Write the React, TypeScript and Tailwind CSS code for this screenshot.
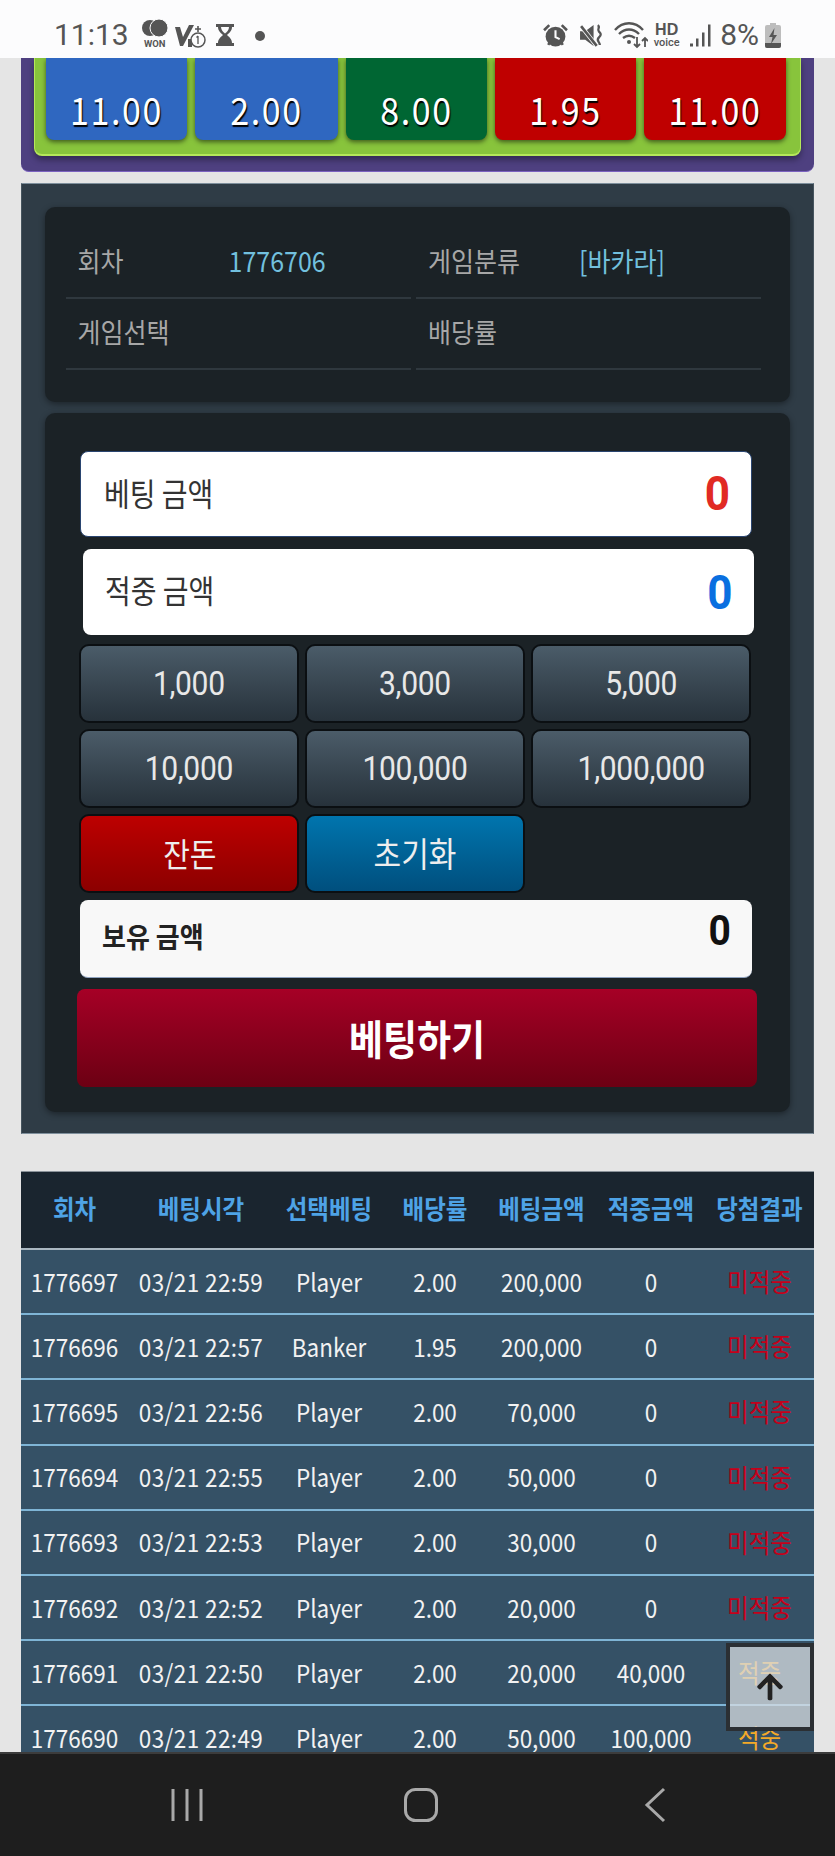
import { FaArrowUp } from 'react-icons/fa';

const odds = [
    { value: '11.00', color: 'bg-[#2f67c0]', width: 'w-[141px]' },
    { value: '2.00', color: 'bg-[#2f67c0]', width: 'w-[143px]' },
    { value: '8.00', color: 'bg-[#006633]', width: 'w-[141px]' },
    { value: '1.95', color: 'bg-[#bf0000]', width: 'w-[141px]' },
    { value: '11.00', color: 'bg-[#bf0000]', width: 'w-[142px]' },
];

const amounts = ['1,000', '3,000', '5,000', '10,000', '100,000', '1,000,000'];

const rows = [
    ['1776697', '03/21 22:59', 'Player', '2.00', '200,000', '0', '미적중'],
    ['1776696', '03/21 22:57', 'Banker', '1.95', '200,000', '0', '미적중'],
    ['1776695', '03/21 22:56', 'Player', '2.00', '70,000', '0', '미적중'],
    ['1776694', '03/21 22:55', 'Player', '2.00', '50,000', '0', '미적중'],
    ['1776693', '03/21 22:53', 'Player', '2.00', '30,000', '0', '미적중'],
    ['1776692', '03/21 22:52', 'Player', '2.00', '20,000', '0', '미적중'],
    ['1776691', '03/21 22:50', 'Player', '2.00', '20,000', '40,000', '적중'],
    ['1776690', '03/21 22:49', 'Player', '2.00', '50,000', '100,000', '적중'],
];

const headers = ['회차', '베팅시각', '선택베팅', '배당률', '베팅금액', '적중금액', '당첨결과'];
const tableCols = 'grid grid-cols-[107px_146px_110px_102px_111px_108px_109px] items-center text-center';

const cellClass = (i: number, cell: string) => {
    if (i === 6) return cell === '적중' ? 'text-[23.500px] text-[#f4a928]' : 'text-[23.500px] text-[#c4001a]';
    if (i === 1) return 'tracking-[0.4px]';
    return '';
};

const StatusBar = () => (
    <div className="relative z-10 h-[58px] shrink-0 bg-[#fcfcfd] flex items-center justify-between pl-[54px] pr-[54px] text-[#555] font-['Roboto',sans-serif]">
        {/* Left: clock and notifications */}
        <div className="flex items-center">
            <span className="text-[30px] leading-none mt-[12px]">11:13</span>
            <div className="relative w-[28px] h-[30px] ml-[12px] mt-[12px]">
                <svg width="28" height="18" viewBox="0 0 28 18" className="absolute -top-[1px] left-0 fill-[#555]">
                    <circle cx="9" cy="9" r="8" />
                    <circle cx="18" cy="9" r="9" stroke="#fcfcfd" strokeWidth="1" />
                </svg>
                <span className="absolute top-[19px] left-0 w-full text-center text-[9.500px] leading-[10px] font-bold">WON</span>
            </div>
            <svg width="32" height="26" viewBox="0 0 32 26" className="ml-[5px] mt-[14px]">
                <path d="M1 4h5l3 10L15 2h5L9 23H6z" fill="#555" />
                <path d="M14 16h4v8h-4z" fill="#555" />
                <circle cx="24" cy="17" r="7" fill="#fcfcfd" stroke="#555" strokeWidth="1.5" />
                <path d="M24 13v8M22.5 14.5L24 13" stroke="#555" strokeWidth="1.3" fill="none" />
                <path d="M24 3v6M21 6h6" stroke="#555" strokeWidth="1.6" />
            </svg>
            <svg width="20" height="24" viewBox="0 0 20 24" className="ml-[9px] mt-[12px]">
                <path d="M1 1h18v3h-2c0 4-3 6-5 8 2 2 5 4 5 8h2v3H1v-3h2c0-4 3-6 5-8-2-2-5-4-5-8H1z" fill="#555" />
                <path d="M6 4h8c0 3-2 5-4 6.500C8 9 6 7 6 4z" fill="#fcfcfd" />
            </svg>
            <span className="w-[10px] h-[10px] rounded-full bg-[#555] ml-[20px] mt-[13px]" />
        </div>

        {/* Right: system icons */}
        <div className="flex items-center mt-[12px]">
            <svg width="25" height="25" viewBox="0 0 24 24">
                <circle cx="12" cy="13" r="9.500" fill="#555" />
                <path d="M12 7v6.500l4 2" stroke="#fcfcfd" strokeWidth="2" fill="none" />
                <path d="M1 7l5-5M23 7l-5-5M5 21l2-3M19 21l-2-3" stroke="#555" strokeWidth="2.500" />
            </svg>
            <svg width="25" height="25" viewBox="0 0 24 24" className="ml-[11px]">
                <path d="M1 8h5l8-6v20l-8-6H1z" fill="#555" />
                <path d="M2 3l15 19" stroke="#fcfcfd" strokeWidth="4" />
                <path d="M2 3l15 19" stroke="#555" strokeWidth="2.500" />
                <path d="M18 2c3 2-1 4 1 6s3 3 0 6 1 4 1 7" stroke="#555" strokeWidth="2.200" fill="none" />
            </svg>
            <svg width="35" height="28" viewBox="0 0 35 28" className="ml-[9px]">
                <path d="M2 9c8-9 20-9 28 0M6 13c6-6 14-6 20 0M10 17c4-3 8-3 12 0" stroke="#555" strokeWidth="2.400" fill="none" />
                <circle cx="16" cy="21" r="2" fill="#555" />
                <path d="M24 16v10M21 23l3 3 3-3M32 26V17M29 20l3-3 3 3" stroke="#555" strokeWidth="1.800" fill="none" />
            </svg>
            <div className="w-[27px] ml-[5px] text-center">
                <div className="text-[16px] leading-[14px] font-bold font-['Liberation_Sans',sans-serif]">HD</div>
                <div className="text-[11px] leading-[11px] font-medium">voice</div>
            </div>
            <svg width="22" height="25" viewBox="0 0 22 24" className="ml-[9px]">
                <path d="M1 20h3v3H1zM7 15h2.500v8H7zM13 9h2.500v14H13zM19 1h2.500v22H19z" fill="#555" />
            </svg>
            <span className="text-[30px] leading-none ml-[9px]">8%</span>
            <svg width="16" height="25" viewBox="0 0 16 25" className="ml-[6px]">
                <path d="M5 0h6v2h3a2 2 0 0 1 2 2v19a2 2 0 0 1-2 2H2a2 2 0 0 1-2-2V4a2 2 0 0 1 2-2h3z" fill="#bdbdbd" />
                <path d="M0 20h16v3a2 2 0 0 1-2 2H2a2 2 0 0 1-2-2z" fill="#555" />
                <path d="M9.500 5L4 14h3.500L6 21l6-9H8.500z" fill="#555" />
            </svg>
        </div>
    </div>
);

const OddsPanel = () => (
    <div className="mx-[21px] h-[113.500px] bg-[#4e4080] border-b border-[#7b62c0] rounded-b-[8px] px-[13px]">
        <div className="h-[98px] bg-[#88c43c] border-x border-b-2 border-[#b5e85a] rounded-b-[8px] pl-[11px] flex gap-[8px] shadow-[0_4px_6px_rgba(0,0,0,0.35)]">
            {odds.map((item, i) => (
                <div key={i} className={`${item.width} ${item.color} h-[82px] rounded-b-[8px] shadow-[0_2px_5px_rgba(0,0,0,0.55)] flex items-end justify-center`}>
                    <span className="text-[34px] leading-[48px] text-white mb-[7px] tracking-[1.600px] scale-y-[1.12] [text-shadow:1px_2px_1px_#000]">{item.value}</span>
                </div>
            ))}
        </div>
    </div>
);

const InfoCell = ({ label, value }: { label: string; value?: string }) => (
    <div className="h-[71px] border-b-2 border-[#2f383e] flex items-center pl-[12px] text-[25px]">
        <span className="w-[151px] text-[#a7a7a7] scale-y-[1.1] -mt-[4px]">{label}</span>
        <span className="text-[#72c0de] scale-y-[1.1] -mt-[4px]">{value}</span>
    </div>
);

const BetPanel = () => (
    <div className="mx-[21px] mt-[11.500px] bg-[#2f3c46] border-y border-[#7e8f9c] border-x border-x-[#46545e] px-[23px] pt-[23px] pb-[21px]">
        {/* Round info */}
        <div className="h-[195px] bg-[#1b2226] rounded-[10px] shadow-[0_2px_6px_rgba(0,0,0,0.4)] pl-[20.500px] pr-[29px] pt-[21px] grid grid-cols-2 gap-x-[5.500px] content-start">
            <InfoCell label="회차" value="1776706" />
            <InfoCell label="게임분류" value="[바카라]" />
            <InfoCell label="게임선택" />
            <InfoCell label="배당률" />
        </div>

        {/* Bet form */}
        <div className="h-[699px] mt-[11px] bg-[#1b2226] rounded-[10px] shadow-[0_2px_6px_rgba(0,0,0,0.4)] pl-[35px] pr-[38px] pt-[38px]">
            <div className="h-[86px] bg-white border border-[#2a4570] rounded-[8px] flex items-center justify-between pl-[23px] pr-[21px]">
                <span className="text-[28px] text-[#333] scale-y-[1.15] -mt-[5px]">베팅 금액</span>
                <span className="text-[44px] font-bold text-[#e12a24] font-['Roboto',sans-serif] scale-y-[1.08]">0</span>
            </div>
            <div className="h-[86px] mt-[12px] ml-[3px] -mr-[1.500px] bg-white rounded-[8px] flex items-center justify-between pl-[22px] pr-[21px]">
                <span className="text-[28px] text-[#333] scale-y-[1.15] -mt-[6px]">적중 금액</span>
                <span className="text-[44px] font-bold text-[#0a6fe0] font-['Roboto',sans-serif] scale-y-[1.08] mt-[1px]">0</span>
            </div>

            <div className="mt-[9px] mr-[1px] grid grid-cols-3 gap-x-[6.500px] gap-y-[6px] auto-rows-[79px] -mx-[1px]">
                {amounts.map((a) => (
                    <button key={a} className="rounded-[10px] border-2 border-[#0b0f12] bg-gradient-to-b from-[#4b5c69] to-[#27323b] text-[30px] text-[#e8e8e8] font-['Roboto',sans-serif] tracking-[-0.3px]">
                        <span className="inline-block scale-y-[1.08] -mt-[2px]">{a}</span>
                    </button>
                ))}
                <button className="rounded-[10px] border-2 border-[#0b0f12] bg-gradient-to-b from-[#bd0000] to-[#8c0000] text-[29px] text-[#eeeeee]">
                    <span className="inline-block scale-y-[1.12] -mt-[6px] ml-[2px]">잔돈</span>
                </button>
                <button className="rounded-[10px] border-2 border-[#0b0f12] bg-gradient-to-b from-[#0075ae] to-[#004f7e] text-[30px] text-[#eeeeee]">
                    <span className="inline-block scale-y-[1.12] -mt-[7px]">초기화</span>
                </button>
            </div>

            <div className="h-[78px] mt-[7px] bg-[#f8f8f8] border-b border-[#8fa3c0] rounded-[8px] flex justify-between pl-[22px] pr-[21px]">
                <span className="text-[26px] font-bold text-[#222] self-center -mt-[7px] scale-y-[1.08]">보유 금액</span>
                <span className="text-[39px] font-bold text-[#111] font-['Roboto',sans-serif] mt-[9px] leading-[46px] scale-y-[1.08]">0</span>
            </div>

            <button className="block w-[680px] h-[98px] mt-[11px] -ml-[3px] rounded-[8px] bg-gradient-to-b from-[#a60026] to-[#6c0013] text-[37px] font-bold text-white">
                <span className="inline-block scale-y-[1.12] -mt-[6px]">베팅하기</span>
            </button>
        </div>
    </div>
);

const HistoryTable = () => (
    <div className="mx-[21px] mt-[37px] bg-[#355166] text-[22.500px]">
        <div className={`${tableCols} h-[79px] bg-[#1a252f] border-t border-b-2 border-t-[#8a9299] border-b-[#aab8c2] font-bold text-[23.500px] text-[#4ea3e6]`}>
            {headers.map((h) => (
                <span key={h} className="scale-y-[1.1] -mt-[2px]">{h}</span>
            ))}
        </div>
        {rows.map((row) => (
            <div key={row[0]} className={`${tableCols} h-[65.200px] border-b-2 border-[#7fb5d6] text-[#f2f2f2]`}>
                {row.map((cell, i) => (
                    <span key={i} className={`scale-y-[1.1] ${cellClass(i, cell)}`}>
                        {cell}
                    </span>
                ))}
            </div>
        ))}
    </div>
);

const NavBar = () => (
    <div className="relative z-10 h-[104px] shrink-0 bg-[#1e1e1e] border-t-2 border-[#3c3c3c]">
        <div className="h-full relative">
            <svg width="32" height="34" viewBox="0 0 32 34" className="absolute left-[171px] top-[34px]">
                <path d="M2 1v32M16 1v32M30 1v32" stroke="#a9a9a9" strokeWidth="3" />
            </svg>
            <svg width="34" height="34" viewBox="0 0 34 34" className="absolute left-[404px] top-[34px]">
                <rect x="1.500" y="1.500" width="31" height="31" rx="10" fill="none" stroke="#a9a9a9" strokeWidth="3" />
            </svg>
            <svg width="22" height="36" viewBox="0 0 22 36" className="absolute left-[644px] top-[33px]">
                <path d="M20 2L3 18l17 16" fill="none" stroke="#a9a9a9" strokeWidth="3" />
            </svg>
        </div>
    </div>
);

const App = () => {
    return (
        <div className="relative w-[835px] h-[1856px] overflow-hidden flex flex-col bg-[#e5e5e5] font-['Noto_Sans_CJK_KR','Noto_Sans',sans-serif]">
            <StatusBar />
            <div className="flex-1 min-h-0 overflow-hidden">
                <OddsPanel />
                <BetPanel />
                <HistoryTable />
            </div>
            <NavBar />

            {/* Scroll to top button floats over the table */}
            <button className="absolute left-[726px] top-[1643px] w-[88px] h-[88px] border-[4px] border-[#2b2f33] bg-[#d8dde2]/75 flex justify-center pt-[25px]">
                <FaArrowUp className="w-[28px] h-[30px] text-[#222]" />
            </button>
        </div>
    );
};

export default App;
